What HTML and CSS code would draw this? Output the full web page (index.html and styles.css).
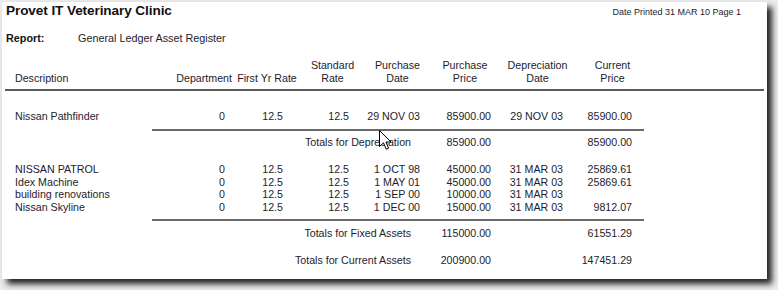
FILE: index.html
```html
<!DOCTYPE html>
<html>
<head>
<meta charset="utf-8">
<link rel="stylesheet" href="styles.css">
</head>
<body>
<div class="page">
  <div class="top">
    <h1 class="title">Provet IT Veterinary Clinic</h1>
    <div class="printed">Date Printed 31 MAR 10 Page 1</div>
  </div>
  <div class="report"><span class="lbl">Report:</span><span>General Ledger Asset Register</span></div>

  <div class="table">
    <div class="row head">
      <div class="c desc">Description</div>
      <div class="c dept">Department</div>
      <div class="c fyr">First Yr Rate</div>
      <div class="c">Standard<br>Rate</div>
      <div class="c">Purchase<br>Date</div>
      <div class="c">Purchase<br>Price</div>
      <div class="c">Depreciation<br>Date</div>
      <div class="c">Current<br>Price</div>
    </div>

    <div class="group first">
      <div class="row data">
        <div class="c desc">Nissan Pathfinder</div><div class="c">0</div><div class="c">12.5</div><div class="c">12.5</div><div class="c">29 NOV 03</div><div class="c">85900.00</div><div class="c">29 NOV 03</div><div class="c">85900.00</div>
      </div>
    </div>
    <div class="rule"></div>
    <div class="row total">
      <div class="c label">Totals for Depreciation</div><div class="c v6">85900.00</div><div class="c v8">85900.00</div>
    </div>

    <div class="group second">
      <div class="row data">
        <div class="c desc">NISSAN PATROL</div><div class="c">0</div><div class="c">12.5</div><div class="c">12.5</div><div class="c">1 OCT 98</div><div class="c">45000.00</div><div class="c">31 MAR 03</div><div class="c">25869.61</div>
      </div>
      <div class="row data">
        <div class="c desc">Idex Machine</div><div class="c">0</div><div class="c">12.5</div><div class="c">12.5</div><div class="c">1 MAY 01</div><div class="c">45000.00</div><div class="c">31 MAR 03</div><div class="c">25869.61</div>
      </div>
      <div class="row data">
        <div class="c desc">building renovations</div><div class="c">0</div><div class="c">12.5</div><div class="c">12.5</div><div class="c">1 SEP 00</div><div class="c">10000.00</div><div class="c">31 MAR 03</div><div class="c"></div>
      </div>
      <div class="row data">
        <div class="c desc">Nissan Skyline</div><div class="c">0</div><div class="c">12.5</div><div class="c">12.5</div><div class="c">1 DEC 00</div><div class="c">15000.00</div><div class="c">31 MAR 03</div><div class="c">9812.07</div>
      </div>
    </div>
    <div class="rule"></div>
    <div class="row total">
      <div class="c label">Totals for Fixed Assets</div><div class="c v6">115000.00</div><div class="c v8">61551.29</div>
    </div>
    <div class="row total grand">
      <div class="c label">Totals for Current Assets</div><div class="c v6">200900.00</div><div class="c v8">147451.29</div>
    </div>
  </div>

  <svg class="cursor" width="13" height="21" viewBox="0 0 13 21">
    <path d="M0.5 0.5 L0.5 16.5 L4.5 12.8 L7.2 19.2 L9.6 18.2 L7 12 L12 12 Z" fill="#fff" stroke="#000" stroke-width="1" stroke-linejoin="miter"/>
  </svg>
</div>
</body>
</html>
```
FILE: styles.css
```css
html, body {
  margin: 0;
  padding: 0;
}
body {
  background: #ececec;
  width: 778px;
  height: 290px;
  overflow: hidden;
  font-family: "Liberation Sans", Arial, sans-serif;
  color: #1e1c2c;
}
.page {
  position: relative;
  margin: 2px 0 0 2px;
  width: 765px;
  height: 277px;
  background: #fff;
  box-shadow: 5px 5px 6px rgba(0, 0, 0, 0.85);
}
.top {
  display: flex;
  justify-content: space-between;
  align-items: flex-start;
  padding-top: 1px;
}
.title {
  margin: 0 0 0 4px;
  font-size: 13.6px;
  line-height: 16px;
  font-weight: bold;
  letter-spacing: -0.1px;
  color: #111;
}
.printed {
  font-size: 9px;
  line-height: 11px;
  margin: 4px 26px 0 0;
}
.report {
  display: flex;
  margin: 12px 0 0 4px;
  font-size: 10.8px;
  line-height: 14px;
}
.report .lbl {
  width: 72px;
  font-weight: bold;
  color: #111;
}
.table {
  margin: 13.5px 0 0 3px;
  width: 759px;
  font-size: 10.67px;
}
.row {
  display: grid;
  grid-template-columns: 165px 64px 66px 65px 65px 70px 75px 75px;
}
.head {
  line-height: 13px;
  padding-bottom: 4px;
  border-bottom: 2px solid #5a5a5a;
}
.head .c {
  text-align: center;
  align-self: end;
}
.head .desc {
  text-align: left;
  padding-left: 10px;
}
.head .dept {
  text-align: right;
  padding-right: 2px;
}
.data {
  line-height: 12.7px;
}
.data .c {
  text-align: right;
  white-space: nowrap;
}
.data .desc {
  text-align: left;
  padding-left: 10px;
}
.data .c:nth-child(2) { padding-right: 9px; }
.data .c:nth-child(3) { padding-right: 17px; }
.data .c:nth-child(4) { padding-right: 16px; }
.data .c:nth-child(5) { padding-right: 10px; }
.data .c:nth-child(6) { padding-right: 9px; }
.data .c:nth-child(7) { padding-right: 12px; }
.data .c:nth-child(8) { padding-right: 18px; }
.group.first {
  margin-top: 19.5px;
}
.group.first .data {
  line-height: 13px;
}
.group.second {
  margin-top: 14px;
}
.rule {
  margin: 5.5px 0 0 147px;
  width: 492px;
  height: 2px;
  background: #6a6a6a;
}
.total {
  line-height: 13px;
  margin-top: 5.5px;
}
.total.grand {
  margin-top: 14px;
}
.total .c {
  text-align: right;
  white-space: nowrap;
}
.total .label {
  grid-column: 1 / 6;
  padding-right: 19px;
}
.total .v6 {
  grid-column: 6;
  padding-right: 9px;
}
.total .v8 {
  grid-column: 8;
  padding-right: 18px;
}
.cursor {
  position: absolute;
  left: 377px;
  top: 128px;
}
```
